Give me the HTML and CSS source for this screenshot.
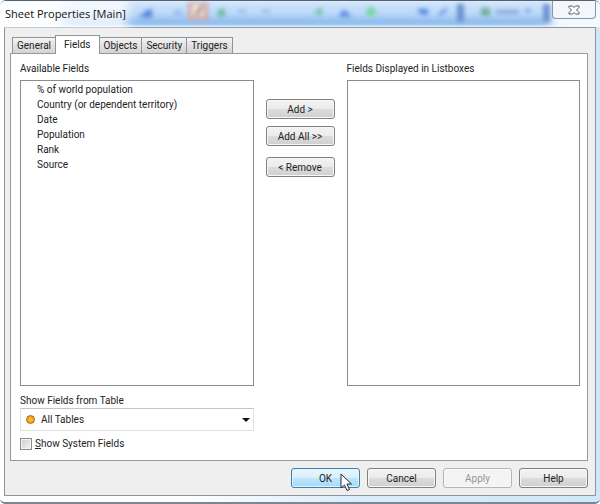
FILE: index.html
```html
<!DOCTYPE html>
<html lang="en">
<head>
  <meta charset="utf-8" />
  <title>Sheet Properties [Main]</title>
  <link rel="stylesheet" href="styles.css">
</head>
<body>
<div class="window">
  <div class="titlebar">
    <svg class="glass" width="600" height="27" viewBox="0 0 600 27" aria-hidden="true">
      <defs>
        <filter id="soft" x="-50%" y="-50%" width="200%" height="200%"><feGaussianBlur stdDeviation="2" /></filter>
        <filter id="wide" x="-20%" y="-50%" width="140%" height="200%"><feGaussianBlur stdDeviation="6 1" /></filter>
        <linearGradient id="sky" x1="0" y1="0" x2="0" y2="1">
          <stop offset="0" stop-color="#d3e7fb" />
          <stop offset="0.5" stop-color="#b9d8f9" />
          <stop offset="0.85" stop-color="#8fbcee" />
          <stop offset="1" stop-color="#a9cff5" />
        </linearGradient>
      </defs>
      <rect x="62" y="0" width="488" height="25" fill="url(#sky)" filter="url(#wide)" />
      <rect x="-10" y="0" width="138" height="27" fill="#fff" opacity="0.75" filter="url(#wide)" />
      <g filter="url(#soft)">
        <path d="M139 16l8-7 5-1v9z" fill="#5b87d8" />
        <rect x="174" y="9" width="8" height="7" fill="#a0c0ee" />
        <rect x="188" y="1" width="20" height="18" fill="#d3a8a4" />
        <rect x="192" y="3" width="12" height="12" fill="#f2e2d8" />
        <path d="M196 14l6-9" stroke="#8c6f7c" stroke-width="3" />
        <rect x="218" y="8" width="7" height="8" fill="#72b9a5" />
        <rect x="238" y="8" width="8" height="5" fill="#a5c2ec" />
        <rect x="262" y="8" width="8" height="5" fill="#a5c2ec" />
        <path d="M313 12l9-6v9z" fill="#70c49d" />
        <path d="M338 16l6-8 8 8z" fill="#5e8ee5" />
        <circle cx="371" cy="11" r="5" fill="#7bd5a6" />
        <path d="M417 8h11v6l-8-1z" fill="#5683df" />
        <path d="M439 14l8-6" stroke="#6995e3" stroke-width="3" />
        <rect x="457" y="3" width="7" height="18" fill="#6b93cf" />
        <rect x="481" y="7" width="9" height="8" fill="#75ad9c" />
        <rect x="496" y="9" width="23" height="4" fill="#8aa6d2" />
        <path d="M525 8h6l-3 5z" fill="#7596c9" />
        <rect x="543" y="3" width="7" height="18" fill="#6b93cf" />
      </g>
    </svg>
    <h1 class="title">Sheet Properties [Main]</h1>
    <button class="close" type="button" aria-label="Close">
      <svg width="12" height="10" viewBox="0 0 12 10"><path d="M1 1h3.500L6 2.500 7.500 1H11v1.500L8.500 5 11 7.500V9H7.500L6 7.500 4.500 9H1V7.500L3.500 5 1 2.500z" fill="#fff" stroke="#555b66" /></svg>
    </button>
  </div>
  <form class="dialog">
    <div class="tabs" role="tablist">
      <button class="tab" type="button" role="tab">General</button>
      <button class="tab active" type="button" role="tab" aria-selected="true">Fields</button>
      <button class="tab" type="button" role="tab">Objects</button>
      <button class="tab" type="button" role="tab">Security</button>
      <button class="tab" type="button" role="tab">Triggers</button>
    </div>
    <div class="panel" role="tabpanel">
      <div class="columns">
        <div class="column">
          <label class="caption" for="available">Available Fields</label>
          <select class="list" id="available" size="6" multiple>
            <option>% of world population</option>
            <option>Country (or dependent territory)</option>
            <option>Date</option>
            <option>Population</option>
            <option>Rank</option>
            <option>Source</option>
          </select>
        </div>
        <div class="moves">
          <button class="button" type="button">Add &gt;</button>
          <button class="button" type="button">Add All &gt;&gt;</button>
          <button class="button remove" type="button">&lt; Remove</button>
        </div>
        <div class="column">
          <label class="caption" for="displayed">Fields Displayed in Listboxes</label>
          <select class="list" id="displayed" size="6" multiple></select>
        </div>
      </div>
      <label class="caption" for="table">Show Fields from Table</label>
      <div class="combo">
        <span class="dot"></span>
        <select class="combo-select" id="table">
          <option>All Tables</option>
        </select>
        <span class="arrow"></span>
      </div>
      <div class="check">
        <input class="checkbox" type="checkbox" id="system">
        <label for="system"><u>S</u>how System Fields</label>
      </div>
    </div>
    <div class="footer">
      <button class="button hot" type="button">OK
        <svg class="cursor" width="13" height="19" viewBox="0 0 13 19" aria-hidden="true"><path d="M1 1v14l3.500-3 2.500 5.500 2.500-1L7 11h4.500z" fill="#fff" stroke="#222a3a" /></svg>
      </button>
      <button class="button" type="button">Cancel</button>
      <button class="button" type="button" disabled>Apply</button>
      <button class="button" type="button">Help</button>
    </div>
  </form>
</div>
</body>
</html>
```
FILE: styles.css
```css
*{box-sizing:border-box;margin:0;padding:0;}
body,button,select,input{font-family:Roboto,"Liberation Sans",Arial,sans-serif;font-size:10px;line-height:15px;color:#222;}
body{background:#fff;}
.window{display:flex;flex-direction:column;min-height:100vh;padding:0 4px 6px;border-top:1px solid #55606e;border-bottom:2px solid #7d8791;border-radius:6px 6px 5px 5px;background:linear-gradient(90deg,#fff 0,#fff 30%,#d9edfb 60%,#cfe8fa 100%);overflow:hidden;}

/* title bar */
.titlebar{position:relative;display:flex;justify-content:space-between;height:26px;margin:0 -4px;padding:0 4px 0 5px;background:#f4f9fe;}
.glass{position:absolute;top:0;left:0;}
.title{position:relative;font:normal 11px/26px "Open Sans","Noto Sans",sans-serif;color:#111;}
.close{position:relative;display:flex;align-items:center;justify-content:center;width:44px;height:18px;border:1px solid #8496ab;border-top:0;border-radius:0 0 4px 4px;background:#f3f7fc;}

.dialog{flex:1;display:flex;flex-direction:column;padding:7px 7px 7px 5px;border:1px solid #8c949d;background:#efefef;}

/* tabs */
.tabs{display:flex;align-items:flex-end;height:19px;margin-bottom:-1px;padding-left:2px;}
.tab{height:17px;padding:0 4px;margin-right:-1px;border:1px solid #8f939a;border-bottom-color:#999;background:linear-gradient(#f3f3f3,#e3e3e3 50%,#d3d3d3);}
.tab.active{position:relative;height:19px;padding:0 8px 1px;border-bottom:0;background:#fff;}

.panel{flex:1;display:flex;flex-direction:column;padding:7px 7px 9px 9px;border:1px solid #999;background:#fff;}
.columns{flex:1;display:flex;gap:12px;margin-bottom:7px;}
.column{flex:1;display:flex;flex-direction:column;}
.caption{display:block;}
.column .caption{margin-bottom:4px;}
.list{flex:1;width:100%;padding:3px 0;border:1px solid #8c8c8c;border-radius:0;background:#fff;outline:0;overflow:hidden;}
.list option{min-height:15px;padding:0 16px;line-height:15px;}
.moves{display:flex;flex-direction:column;gap:7px;padding-top:38px;}
.remove{margin-top:4px;}

/* push buttons */
.button{position:relative;width:69px;height:20px;border:1px solid #808080;border-radius:3px;background:linear-gradient(#f3f3f3,#ebebeb 50%,#dcdcdc 51%,#cfcfcf);box-shadow:inset 0 0 0 1px #f8f8f8;}
.button:disabled{border-color:#b5b5b5;color:#959595;background:#f4f4f4;}
.hot{border-color:#3c7fb1;background:linear-gradient(#eaf6fd,#d7effc 50%,#bde6fd 51%,#a7d9f5);box-shadow:inset 0 0 0 1px #e0f4fd;}
.cursor{position:absolute;top:4px;left:48px;}

.combo{position:relative;width:234px;}
.combo-select{display:block;width:100%;height:23px;padding:0 20px;border:1px solid #e0e0e0;border-top-color:#c4c4c4;border-radius:0;background:#fff;appearance:none;}
.dot{position:absolute;top:7px;left:6px;width:9px;height:9px;border:1px solid #a96413;border-radius:50%;background:radial-gradient(circle,#ffc23a,#ec9008);}
.arrow{position:absolute;top:10px;right:4px;border:4px solid transparent;border-top-color:#111;border-bottom:0;pointer-events:none;}
.check{display:flex;align-items:center;gap:3px;margin-top:5px;}
.checkbox{width:12px;height:12px;border:1px solid #8c8c8c;background:linear-gradient(135deg,#ccc,#f6f6f6);box-shadow:inset 0 0 0 1px #f4f4f4;appearance:none;}
.footer{display:flex;justify-content:flex-end;gap:7px;margin-top:7px;}
```
